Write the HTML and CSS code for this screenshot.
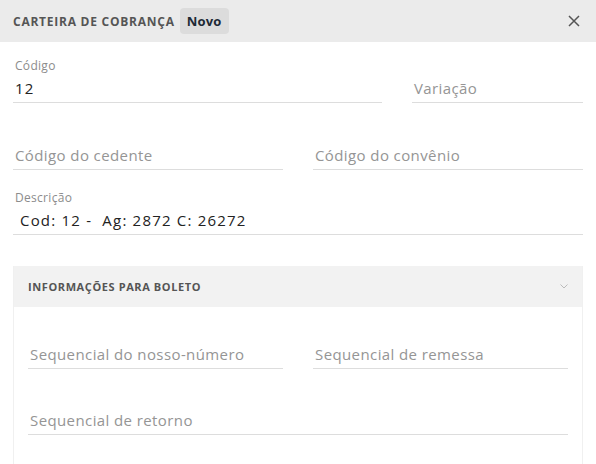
FILE: index.html
```html
<!DOCTYPE html>
<html lang="pt-BR">
<head>
    <meta charset="UTF-8">
    <title>Carteira de cobrança</title>
    <link rel="stylesheet" href="styles.css">
</head>
<body>
    <div class="modal">
        <div class="modal-header">
            <span class="modal-title">Carteira de cobrança</span>
            <span class="badge">Novo</span>
            <button class="close" aria-label="Fechar">
                <svg width="12" height="12" viewBox="0 0 12 12"><path d="M1 1 L11 11 M11 1 L1 11" stroke="#555" stroke-width="1.5" fill="none"/></svg>
            </button>
        </div>

        <div class="modal-body">
            <!-- código / variação -->
            <div class="row row-main">
                <div class="field">
                    <label>Código</label>
                    <div class="input value">12</div>
                </div>
                <div class="field">
                    <div class="input placeholder">Variação</div>
                </div>
            </div>

            <div class="row row-half row-gap-lg">
                <div class="field">
                    <div class="input placeholder">Código do cedente</div>
                </div>
                <div class="field">
                    <div class="input placeholder">Código do convênio</div>
                </div>
            </div>

            <div class="row row-gap">
                <div class="field">
                    <label>Descrição</label>
                    <div class="input value value-indent">Cod: 12 -&nbsp; Ag: 2872 C: 26272</div>
                </div>
            </div>

            <!-- informações para boleto -->
            <div class="panel">
                <div class="panel-header">
                    <span>Informações para boleto</span>
                    <svg width="8" height="5" viewBox="0 0 8 5"><path d="M0.5 0.5 L4 4 L7.5 0.5" stroke="#bbb" stroke-width="1" fill="none"/></svg>
                </div>
                <div class="panel-body">
                    <div class="row row-half">
                        <div class="field">
                            <div class="input placeholder">Sequencial do nosso-número</div>
                        </div>
                        <div class="field">
                            <div class="input placeholder">Sequencial de remessa</div>
                        </div>
                    </div>
                    <div class="row row-gap-md">
                        <div class="field">
                            <div class="input placeholder">Sequencial de retorno</div>
                        </div>
                    </div>
                </div>
            </div>
        </div>
    </div>
</body>
</html>
```
FILE: styles.css
```css
body {
    margin: 0;
    font-family: "Open Sans", "Liberation Sans", sans-serif;
    background: #ffffff;
    color: #222;
}
.modal {
    width: 596px;
}
.modal-header {
    height: 42px;
    background: #ebebeb;
    display: flex;
    align-items: center;
    padding: 0 13px;
}
.modal-title {
    font-size: 12px;
    font-weight: 700;
    text-transform: uppercase;
    letter-spacing: 0.75px;
    color: #555;
}
.badge {
    margin-left: 5px;
    background: #dcdcdc;
    border-radius: 4px;
    padding: 4px 7px;
    font-size: 13px;
    font-weight: 700;
    letter-spacing: 0.2px;
    color: #1d2935;
}
.close {
    margin-left: auto;
    border: none;
    background: none;
    padding: 0;
    display: flex;
    margin-right: 3px;
}
.modal-body {
    padding: 16px 13px 0;
}
.row {
    display: flex;
    align-items: flex-end;
    gap: 30px;
}
.row-main .field:first-child {
    width: 369px;
}
.row-main .field:last-child {
    flex: 1;
}
.row-half .field {
    flex: 1;
}
.row .field:only-child {
    flex: 1;
}
.row-gap-lg {
    margin-top: 38px;
}
.row-gap {
    margin-top: 20px;
}
.row-gap-md {
    margin-top: 37px;
}
.field label {
    display: block;
    font-size: 12px;
    line-height: 16px;
    letter-spacing: 0.3px;
    color: #8c8c8c;
    padding-left: 2px;
}
.input {
    height: 28px;
    line-height: 29px;
    font-size: 15px;
    color: #222;
    letter-spacing: 0.4px;
    border-bottom: 1px solid #ddd;
    padding-left: 2px;
}
.value {
    letter-spacing: 1.2px;
}
.placeholder {
    color: #959595;
}
.value-indent {
    padding-left: 7px;
}
.panel {
    margin-top: 31px;
    border: 1px solid #f0f0f0;
    border-top: none;
}
.panel-header {
    height: 41px;
    background: #f2f2f2;
    display: flex;
    align-items: center;
    justify-content: space-between;
    padding: 0 14px 0 14px;
    font-size: 11px;
    font-weight: 700;
    text-transform: uppercase;
    letter-spacing: 0.6px;
    color: #555;
}
.panel-body {
    padding: 33px 14px 40px;
}
```
